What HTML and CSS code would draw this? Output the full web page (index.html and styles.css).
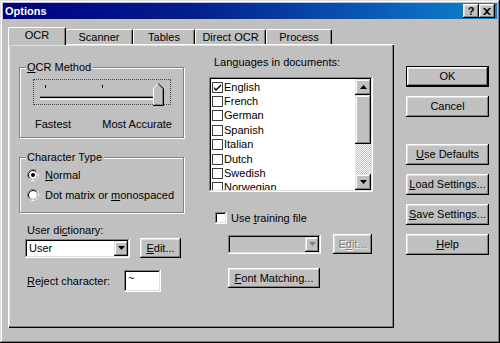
FILE: index.html
```html
<!DOCTYPE html>
<html lang="en">
<head>
    <meta charset="UTF-8">
    <meta name="viewport" content="width=device-width, initial-scale=1.0">
    <title>Options</title>
    <link rel="stylesheet" href="styles.css">
</head>
<body>
<div class="window">
    <div class="titlebar">
        <span class="title">Options</span>
        <div class="caption-btns">
            <span class="cap-btn">?</span>
            <span class="cap-btn">
                <svg width="8" height="7" viewBox="0 0 8 7"><path d="M0 0h2l2 2 2-2h2L5 3.5 8 7H6L4 5 2 7H0l3-3.5z" fill="#000"/></svg>
            </span>
        </div>
    </div>
    <div class="content">
        <div class="tabset">
            <div class="tabs">
                <div class="tab active tab-ocr">OCR</div>
                <div class="tab tab-scanner">Scanner</div>
                <div class="tab tab-tables">Tables</div>
                <div class="tab tab-direct">Direct OCR</div>
                <div class="tab tab-process">Process</div>
            </div>
            <div class="panel">
                <div class="col-left">
                    <div class="group group-method">
                        <div class="group-label"><u>O</u>CR Method</div>
                        <div class="slider">
                            <svg width="136" height="24" viewBox="0 0 136 24" overflow="visible">
                                <rect x="11" y="5" width="1" height="3" fill="#000"/>
                                <rect x="68" y="5" width="1" height="3" fill="#000"/>
                                <rect x="124" y="5" width="1" height="3" fill="#000"/>
                                <rect x="6" y="16" width="120" height="1" fill="#808080"/>
                                <rect x="6" y="17" width="120" height="1" fill="#000"/>
                                <rect x="6" y="18" width="120" height="1" fill="#dfdfdf"/>
                                <rect x="6" y="19" width="120" height="1" fill="#fff"/>
                                <g transform="translate(119 3)">
                                    <path d="M0 5 5 0 10 5V22H0z" fill="#c0c0c0"/>
                                    <path d="M0.5 22V5.2L5.2 0.5" stroke="#fff" fill="none"/>
                                    <path d="M5 0.5 10.5 5.5V22.5H0" stroke="#000" fill="none"/>
                                    <path d="M5.5 1.8 9.5 5.8V21.5H1" stroke="#808080" fill="none"/>
                                </g>
                            </svg>
                        </div>
                        <div class="slider-labels"><span>Fastest</span><span>Most Accurate</span></div>
                    </div>
                    <div class="group group-type">
                        <div class="group-label">Character Type</div>
                        <div class="radio-row">
                            <svg class="radio" width="12" height="12" viewBox="0 0 12 12">
                                <circle cx="6" cy="6" r="5.5" fill="#fff" stroke="#808080"/>
                                <path d="M9.9 2.1A5.5 5.5 0 0 1 2.1 9.9" stroke="#fff" fill="none"/>
                                <circle cx="6" cy="6" r="4.5" fill="none" stroke="#000"/>
                                <path d="M9.2 2.8A4.5 4.5 0 0 1 2.8 9.2" stroke="#dfdfdf" fill="none"/>
                                <circle cx="6" cy="6" r="2" fill="#000"/>
                            </svg>
                            <span><u>N</u>ormal</span>
                        </div>
                        <div class="radio-row">
                            <svg class="radio" width="12" height="12" viewBox="0 0 12 12">
                                <circle cx="6" cy="6" r="5.5" fill="#fff" stroke="#808080"/>
                                <path d="M9.9 2.1A5.5 5.5 0 0 1 2.1 9.9" stroke="#fff" fill="none"/>
                                <circle cx="6" cy="6" r="4.5" fill="none" stroke="#000"/>
                                <path d="M9.2 2.8A4.5 4.5 0 0 1 2.8 9.2" stroke="#dfdfdf" fill="none"/>
                            </svg>
                            <span>Dot matrix or <u>m</u>onospaced</span>
                        </div>
                    </div>
                    <div class="field-label dict-label">User di<u>c</u>tionary:</div>
                    <div class="combo-row">
                        <div class="combo">
                            <span class="combo-text">User</span>
                            <span class="drop-btn"><svg width="7" height="4" viewBox="0 0 7 4"><path d="M0 0h7L3.5 4z" fill="#000"/></svg></span>
                        </div>
                        <div class="btn btn-edit"><span><u>E</u>dit...</span></div>
                    </div>
                    <div class="reject-row">
                        <span class="reject-label"><u>R</u>eject character:</span>
                        <div class="textbox">~</div>
                    </div>
                </div>
                <div class="col-right">
                    <div class="field-label lang-label">Lan<u>g</u>uages in documents:</div>
                    <div class="listbox">
                        <div class="list-items">
                            <div class="item"><span class="cb"><svg width="9" height="9" viewBox="0 0 9 9"><path d="M1 4l2 2 5-5v2L3 8 1 6z" fill="#000"/></svg></span>English</div>
                            <div class="item"><span class="cb"></span>French</div>
                            <div class="item"><span class="cb"></span>German</div>
                            <div class="item"><span class="cb"></span>Spanish</div>
                            <div class="item"><span class="cb"></span>Italian</div>
                            <div class="item"><span class="cb"></span>Dutch</div>
                            <div class="item"><span class="cb"></span>Swedish</div>
                            <div class="item"><span class="cb"></span>Norwegian</div>
                        </div>
                        <div class="scrollbar">
                            <div class="sb-btn"><svg width="7" height="4" viewBox="0 0 7 4"><path d="M3.5 0 7 4H0z" fill="#000"/></svg></div>
                            <div class="sb-thumb"></div>
                            <div class="sb-track"></div>
                            <div class="sb-btn"><svg width="7" height="4" viewBox="0 0 7 4"><path d="M0 0h7L3.5 4z" fill="#000"/></svg></div>
                        </div>
                    </div>
                    <div class="training-row">
                        <span class="check-box"></span>
                        <span>Use <u>t</u>raining file</span>
                    </div>
                    <div class="combo-row disabled-row">
                        <div class="combo combo-disabled">
                            <span class="combo-text"></span>
                            <span class="drop-btn"><svg width="7" height="4" viewBox="0 0 7 4"><path d="M0 0h7L3.5 4z" fill="#808080"/></svg></span>
                        </div>
                        <div class="btn btn-edit2 disabled"><span>E<u>d</u>it...</span></div>
                    </div>
                    <div class="btn btn-font"><span><u>F</u>ont Matching...</span></div>
                </div>
            </div>
        </div>
        <div class="side-buttons">
            <div class="btn btn-side btn-default">OK</div>
            <div class="btn btn-side btn-cancel">Cancel</div>
            <div class="btn btn-side"><span><u>U</u>se Defaults</span></div>
            <div class="btn btn-side"><span><u>L</u>oad Settings...</span></div>
            <div class="btn btn-side"><span><u>S</u>ave Settings...</span></div>
            <div class="btn btn-side"><span><u>H</u>elp</span></div>
        </div>
    </div>
</div>
</body>
</html>
```

FILE: styles.css
```css
* {
    box-sizing: border-box;
}
body {
    margin: 0;
    background-color: #c0c0c0;
    color: #000;
    font-family: "Liberation Sans", Arial, sans-serif;
    font-size: 11px;
    line-height: 13px;
}
u {
    text-decoration: underline;
    text-underline-offset: 1px;
}
svg {
    display: block;
}

/* window frame */
.window {
    width: 500px;
    height: 343px;
    padding: 3px;
    background-color: #c0c0c0;
    box-shadow: inset -1px -1px #000, inset 1px 1px #dfdfdf, inset -2px -2px #808080, inset 2px 2px #fff;
}
.titlebar {
    height: 16px;
    display: flex;
    align-items: center;
    justify-content: space-between;
    padding: 0 2px 0 2px;
    background: linear-gradient(90deg, #000080 0%, #03208f 40%, #1084d0 100%);
    color: #fff;
    font-weight: bold;
}
.caption-btns {
    display: flex;
}
.cap-btn {
    width: 16px;
    height: 14px;
    display: flex;
    align-items: center;
    justify-content: center;
    background-color: #c0c0c0;
    box-shadow: inset -1px -1px #000, inset 1px 1px #fff, inset -2px -2px #808080, inset 2px 2px #dfdfdf;
    color: #000;
    font-weight: bold;
    font-size: 11px;
}

/* layout */
.content {
    display: flex;
    padding: 8px 0 0 5px;
}
.tabset {
    width: 386px;
}
.tabs {
    display: flex;
    align-items: flex-end;
    height: 17px;
}
.tab {
    height: 15px;
    display: flex;
    align-items: center;
    justify-content: center;
    border-top: 1px solid #fff;
    border-left: 1px solid #fff;
    border-right: 1px solid #000;
    border-radius: 2px 2px 0 0;
    box-shadow: inset -1px 0 #808080;
}
.tab.active {
    height: 18px;
    margin-bottom: -1px;
    padding-bottom: 2px;
    position: relative;
    z-index: 1;
    background-color: #c0c0c0;
}
.tab-ocr { width: 58px; }
.tab-scanner { width: 67px; border-left: none; }
.tab-tables { width: 62px; }
.tab-direct { width: 71px; }
.tab-process { width: 66px; }

.panel {
    height: 284px;
    display: flex;
    padding-left: 11px;
    box-shadow: inset 1px 1px #fff, inset -1px -1px #000, inset -2px -2px #808080, inset 2px 2px #dfdfdf;
}

/* left column */
.col-left {
    width: 165px;
    padding-top: 23px;
}
.group {
    border: 1px solid #808080;
    box-shadow: inset 1px 1px #fff, 1px 1px #fff;
}
.group-label {
    width: fit-content;
    margin: -7px 0 0 6px;
    padding: 0 2px 0 1px;
    background-color: #c0c0c0;
}
.group-method {
    height: 71px;
}
.slider {
    width: 138px;
    height: 26px;
    margin: 5px 0 0 13px;
    border: 1px dotted #404040;
}
.slider-labels {
    display: flex;
    justify-content: space-between;
    margin-top: 13px;
    padding: 0 11px 0 15px;
}
.group-type {
    height: 56px;
    margin-top: 19px;
}
.group-type .group-label {
    margin-bottom: 1px;
}
.radio-row {
    height: 20px;
    display: flex;
    align-items: center;
    padding-left: 7px;
}
.radio {
    margin-right: 6px;
}
.field-label {
    padding-left: 8px;
}
.dict-label {
    margin-top: 11px;
}
.combo-row {
    display: flex;
    align-items: center;
    height: 20px;
    margin-top: 1px;
}
.combo {
    width: 105px;
    height: 19px;
    margin-left: 6px;
    display: flex;
    align-items: center;
    padding: 2px;
    background-color: #fff;
    box-shadow: inset -1px -1px #fff, inset 1px 1px #808080, inset -2px -2px #dfdfdf, inset 2px 2px #000;
}
.combo-text {
    flex: 1;
    padding-left: 2px;
}
.drop-btn {
    width: 14px;
    height: 15px;
    display: flex;
    align-items: center;
    justify-content: center;
    background-color: #c0c0c0;
    box-shadow: inset -1px -1px #000, inset 1px 1px #dfdfdf, inset -2px -2px #808080, inset 2px 2px #fff;
}
.btn {
    display: flex;
    align-items: center;
    justify-content: center;
    background-color: #c0c0c0;
    box-shadow: inset -1px -1px #000, inset 1px 1px #fff, inset -2px -2px #808080, inset 2px 2px #dfdfdf;
}
.btn-edit {
    width: 41px;
    height: 20px;
    margin-left: 10px;
}
.reject-row {
    display: flex;
    align-items: center;
    height: 22px;
    margin-top: 12px;
}
.reject-label {
    width: 105px;
    padding-left: 8px;
}
.textbox {
    width: 37px;
    height: 22px;
    padding: 3px 4px;
    background-color: #fff;
    line-height: 10px;
    box-shadow: inset -1px -1px #fff, inset 1px 1px #808080, inset -2px -2px #dfdfdf, inset 2px 2px #000;
}

/* right column */
.col-right {
    width: 164px;
    margin-left: 25px;
    padding-top: 12px;
}
.lang-label {
    padding-left: 5px;
}
.listbox {
    height: 115px;
    margin-top: 8px;
    padding: 2px;
    display: flex;
    background-color: #fff;
    box-shadow: inset -1px -1px #fff, inset 1px 1px #808080, inset -2px -2px #dfdfdf, inset 2px 2px #000;
}
.list-items {
    flex: 1;
    overflow: hidden;
    padding-top: 1px;
}
.item {
    height: 14.4px;
    display: flex;
    align-items: center;
    padding-left: 1px;
}
.cb {
    width: 11px;
    height: 11px;
    margin-right: 1px;
    display: flex;
    align-items: center;
    justify-content: center;
    border: 1px solid #404040;
    background-color: #fff;
}
.scrollbar {
    width: 16px;
    display: flex;
    flex-direction: column;
}
.sb-btn {
    height: 16px;
    display: flex;
    align-items: center;
    justify-content: center;
    background-color: #c0c0c0;
    box-shadow: inset -1px -1px #000, inset 1px 1px #dfdfdf, inset -2px -2px #808080, inset 2px 2px #fff;
}
.sb-thumb {
    height: 49px;
    background-color: #c0c0c0;
    box-shadow: inset -1px -1px #000, inset 1px 1px #dfdfdf, inset -2px -2px #808080, inset 2px 2px #fff;
}
.sb-track {
    flex: 1;
    background: repeating-conic-gradient(#fff 0 25%, #c0c0c0 0 50%) 0 0 / 2px 2px;
}
.training-row {
    display: flex;
    align-items: center;
    height: 14px;
    margin-top: 19px;
    padding-left: 6px;
}
.check-box {
    width: 12px;
    height: 12px;
    margin-right: 4px;
    background-color: #fff;
    box-shadow: inset -1px -1px #fff, inset 1px 1px #808080, inset -2px -2px #dfdfdf, inset 2px 2px #000;
}
.disabled-row {
    margin-top: 9px;
    padding-left: 13px;
}
.combo-disabled {
    width: 93px;
    background-color: #c0c0c0;
}
.btn-edit2 {
    width: 39px;
    height: 20px;
    margin-left: 12px;
}
.disabled {
    color: #808080;
    text-shadow: 1px 1px #fff;
}
.btn-font {
    width: 92px;
    height: 20px;
    margin: 14px 0 0 19px;
}

/* side buttons */
.side-buttons {
    width: 83px;
    margin-left: 12px;
    padding-top: 39px;
    display: flex;
    flex-direction: column;
    gap: 9px;
}
.btn-side {
    height: 21px;
}
.btn-default {
    border: 1px solid #000;
}
.btn-cancel {
    margin-bottom: 18px;
}
```
